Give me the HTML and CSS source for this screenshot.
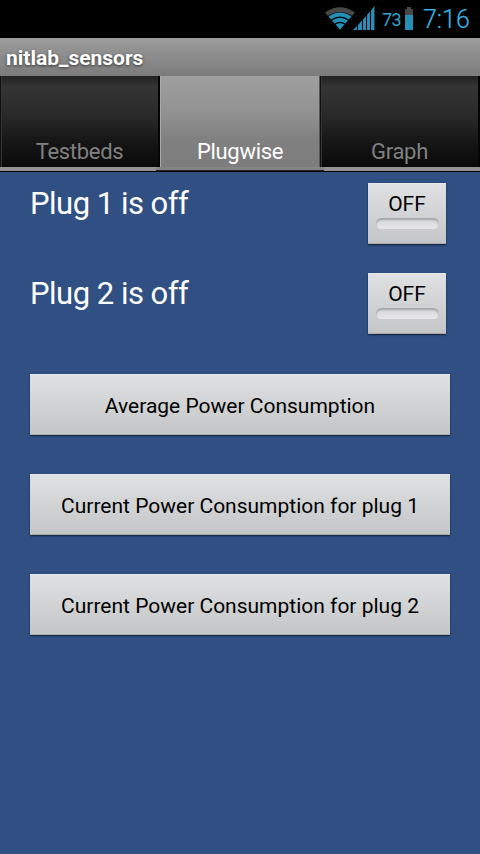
FILE: index.html
```
<!DOCTYPE html>
<html lang="en">
<head>
<meta charset="utf-8">
<title>nitlab_sensors</title>
<link rel="stylesheet" href="styles.css">
</head>
<body>
<header class="status">
  <svg class="wifi" width="30" height="23" viewBox="0 0 30 23">
    <path class="dim" d="M0 5.500Q15 -5 30 5.500L27 9Q15 1 3 9Z"/>
    <path class="lit" d="M3.500 9.500Q15 1.500 26.500 9.500L24 12.500Q15 6.500 6 12.500Z"/>
    <path class="lit" d="M7 13.500Q15 8 23 13.500L20.500 16.500Q15 13 9.500 16.500Z"/>
    <path class="lit" d="M10.500 17.500Q15 14.500 19.500 17.500L15 22.700Z"/>
  </svg>
  <svg class="signal" width="22" height="24" viewBox="0 0 22 24">
    <path class="lit" d="M0 24L4 20V24ZM5 19L9 14.500V24H5ZM10 13.500L13 10V24H10ZM14 9L17 5.500V24H14ZM18 4.500L21.500 0V24H18Z"/>
  </svg>
  <span class="level">73</span>
  <svg class="battery" width="8" height="23" viewBox="0 0 8 23">
    <path class="dim" d="M2 0H6V2H8V8H0V2H2Z"/>
    <path class="lit" d="M0 8H8V23H0Z"/>
  </svg>
  <span class="clock">7:16</span>
</header>
<h1 class="title"><span>nitlab_sensors</span></h1>
<nav class="tabs">
  <div class="tab"><span>Testbeds</span></div>
  <div class="tab selected"><span>Plugwise</span></div>
  <div class="tab"><span>Graph</span></div>
</nav>
<div class="strip"><i></i><i></i><i></i></div>
<main>
  <div class="row"><span class="label">Plug 1 is off</span><button class="toggle"><span>OFF</span><i></i></button></div>
  <div class="row"><span class="label">Plug 2 is off</span><button class="toggle"><span>OFF</span><i></i></button></div>
  <button class="wide">Average Power Consumption</button>
  <button class="wide">Current Power Consumption for plug 1</button>
  <button class="wide">Current Power Consumption for plug 2</button>
</main>
</body>
</html>
```
FILE: styles.css
```
* { box-sizing: border-box; }
body { margin: 0; width: 480px; height: 854px; overflow: hidden; background: #305084; font-family: Roboto, sans-serif; }
.status { height: 38px; background: #000; display: flex; align-items: flex-start; padding-left: 325px; color: #33b5e5; }
.status svg { flex: none; margin-top: 7px; }
.dim { fill: #474747; }
.lit { fill: #258fb8; }
.status .signal { margin: 6px 0 0 -2px; }
.level { font-size: 18px; line-height: 20px; margin: 10px 0 0 7px; width: 23px; font-weight: 400; letter-spacing: -.5px; color: #2da2ce; }
.clock { font-size: 25px; line-height: 30px; margin: 5px 0 0 10px; white-space: nowrap; font-weight: 300; -webkit-text-stroke: .2px #33b5e5; }
.title { height: 38px; margin: 0; padding-left: 6px; font-size: 21px; line-height: 40px; font-weight: 700; color: #fff; background: linear-gradient(#9c9c9c, #7b7b7b); text-shadow: 0 1px 3px #333; }
.tabs { height: 91px; display: grid; grid-template-columns: 160px 160px 160px; }
.tab { display: flex; align-items: flex-end; justify-content: center; padding-bottom: 3px; font-size: 22px; letter-spacing: -.3px; line-height: 24px; color: #808080; background: linear-gradient(#222 0, #343434 12%, #292929 45%, #171717 70%, #090909); border-left: 1px solid #111; border-right: 2px solid #050505; box-shadow: inset 1px 0 #333; }
.selected { color: #fff; background: linear-gradient(#9f9f9f, #929292 40%, #808080 70%, #7d7d7d); border-left: 1px solid #aaa; border-right: 1px solid #555; box-shadow: none; }
.strip { height: 5px; display: grid; grid-template-columns: 156px 168px 156px; border-bottom: 1px solid #000; }
.strip i { background: #929292; }
.strip i:nth-child(2) { background: linear-gradient(#858585 75%, #222 75%); }
main { padding: 11px 30px 0; display: flex; flex-direction: column; }
.row { height: 90px; display: flex; justify-content: space-between; padding-right: 4px; }
.label { color: #fff; font-size: 31px; letter-spacing: -.5px; line-height: 41px; }
button { font-family: inherit; border: 0; color: #000; padding: 0; background: linear-gradient(#dfe1e3, #c4c5c6); border-radius: 1px; box-shadow: inset 0 1px #e6e8ea, inset 0 -1px #aaa, 0 1px 2px #101d32; font-size: 21px; }
.toggle { width: 78px; height: 61px; display: flex; flex-direction: column; align-items: center; line-height: 24px; padding-top: 9px; }
.toggle i { width: 63px; height: 11px; margin-top: 2px; border-radius: 6px; background: linear-gradient(#d4d4d5, #e8e8ea); box-shadow: inset 0 2px 2px #a4a5a7; }
.wide { height: 61px; margin: 11px 0 28px; width: 420px; line-height: 24px; padding-top: 2px; }
```
